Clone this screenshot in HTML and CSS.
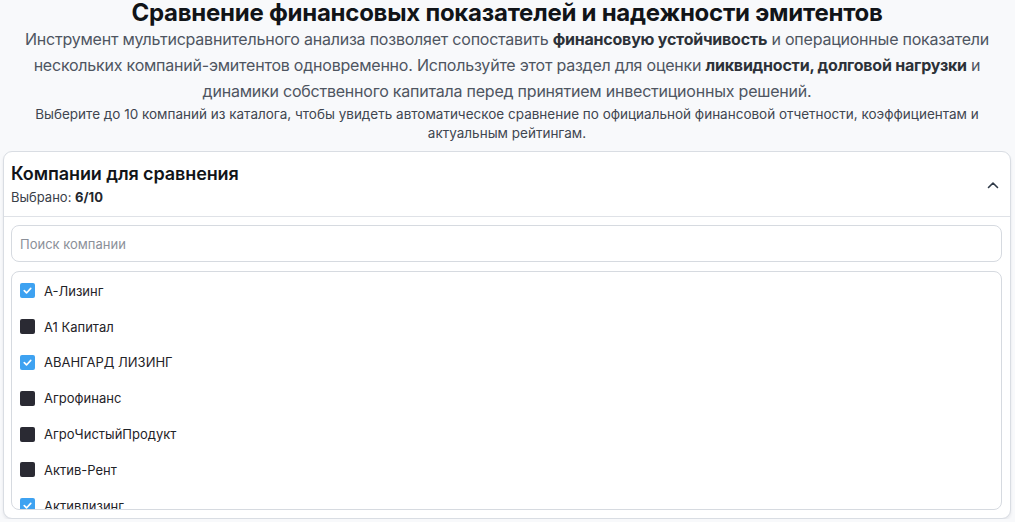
FILE: index.html
```html
<!DOCTYPE html>
<html lang="ru">
<head>
<meta charset="utf-8">
<title>Сравнение эмитентов</title>
<link rel="stylesheet" href="styles.css">
</head>
<body>
<div class="page">
  <header class="intro">
    <h1 class="title">Сравнение финансовых показателей и надежности эмитентов</h1>
    <p class="lead">Инструмент мультисравнительного анализа позволяет сопоставить <b>финансовую устойчивость</b> и операционные показатели нескольких компаний-эмитентов одновременно. Используйте этот раздел для оценки <b>ликвидности, долговой нагрузки</b> и динамики собственного капитала перед принятием инвестиционных решений.</p>
    <p class="hint">Выберите до 10 компаний из каталога, чтобы увидеть автоматическое сравнение по официальной финансовой отчетности, коэффициентам и актуальным рейтингам.</p>
  </header>

  <section class="card">
    <div class="card-head">
      <div class="head-text">
        <h2 class="card-title">Компании для сравнения</h2>
        <div class="count">Выбрано: <b>6/10</b></div>
      </div>
      <svg class="chevron" width="14" height="14" viewBox="0 0 14 14" aria-hidden="true"><path d="M2.5 9.5 L7 5 L11.5 9.5" fill="none" stroke="#2f3a48" stroke-width="1.6" stroke-linecap="round" stroke-linejoin="round"/></svg>
    </div>
    <div class="card-body">
      <input class="search" type="text" placeholder="Поиск компании">
      <div class="list">
        <label class="item"><span class="box on"><svg viewBox="0 0 16 16"><path d="M4 8.2 L6.8 11 L12 5.4" fill="none" stroke="#fff" stroke-width="2" stroke-linecap="round" stroke-linejoin="round"/></svg></span>А-Лизинг</label>
        <label class="item"><span class="box"></span>А1 Капитал</label>
        <label class="item"><span class="box on"><svg viewBox="0 0 16 16"><path d="M4 8.2 L6.8 11 L12 5.4" fill="none" stroke="#fff" stroke-width="2" stroke-linecap="round" stroke-linejoin="round"/></svg></span>АВАНГАРД ЛИЗИНГ</label>
        <label class="item"><span class="box"></span>Агрофинанс</label>
        <label class="item"><span class="box"></span>АгроЧистыйПродукт</label>
        <label class="item"><span class="box"></span>Актив-Рент</label>
        <label class="item"><span class="box on"><svg viewBox="0 0 16 16"><path d="M4 8.2 L6.8 11 L12 5.4" fill="none" stroke="#fff" stroke-width="2" stroke-linecap="round" stroke-linejoin="round"/></svg></span>Активлизинг</label>
        <label class="item"><span class="box"></span>Альфа-Банк</label>
        <label class="item"><span class="box"></span>Аренда-Центр</label>
      </div>
    </div>
  </section>
</div>
</body>
</html>
```

FILE: styles.css
```css
* { box-sizing: border-box; }
html, body { margin: 0; padding: 0; }
body {
  background: #f8f9fb;
  font-family: Inter, "Noto Sans", "Liberation Sans", sans-serif;
  color: #1f2328;
}
.page {
  padding: 0 4px 0 3px;
}
.intro {
  text-align: center;
  padding: 0 14px;
}
.title {
  margin: 0;
  font-size: 24px;
  line-height: 26px;
  font-weight: 700;
  color: #111418;
  letter-spacing: -0.25px;
}
.lead {
  margin: 0;
  font-size: 16px;
  line-height: 26px;
  color: #4e5561;
  letter-spacing: -0.22px;
}
.lead b { font-weight: 700; color: #2c3138; }
.hint {
  margin: 1px 0 0;
  font-size: 13.5px;
  line-height: 19px;
  color: #3f4650;
}
.card {
  margin-top: 8px;
  background: #fff;
  border: 1px solid #d9dde3;
  border-radius: 9px;
  box-shadow: 0 2px 3px rgba(20, 30, 50, 0.08);
  overflow: hidden;
}
.card-head {
  display: flex;
  align-items: center;
  justify-content: space-between;
  padding: 10px 10px 9px 7px;
  border-bottom: 1px solid #dfe2e7;
}
.card-title {
  margin: 0;
  font-size: 18px;
  line-height: 24px;
  font-weight: 600;
  color: #111418;
  letter-spacing: -0.1px;
}
.count {
  margin-top: 1px;
  font-size: 13px;
  line-height: 20px;
  color: #3a4049;
}
.count b { font-weight: 700; color: #23272d; }
.chevron { display: block; margin-top: 0; }
.card-body {
  padding: 8px 8px 8px 7px;
  display: flex;
  flex-direction: column;
  gap: 9px;
}
.search {
  display: block;
  width: 100%;
  height: 37px;
  border: 1px solid #d6dae0;
  border-radius: 8px;
  padding: 0 8px;
  font-family: inherit;
  font-size: 13px;
  color: #1f2328;
  background: #fff;
  outline: none;
}
.search::placeholder { color: #8b9099; }
.list {
  height: 239px;
  border: 1px solid #d6dae0;
  border-radius: 8px;
  padding: 1px 8px 0;
  overflow: hidden;
}
.item {
  display: flex;
  align-items: center;
  gap: 9px;
  height: 35.8px;
  font-size: 13px;
  color: #1f2328;
}
.box {
  flex: none;
  width: 15px;
  height: 15px;
  border-radius: 2px;
  background: #2a2a33;
  display: flex;
  align-items: center;
  justify-content: center;
}
.box.on { background: #3ea2f1; }
.box svg { width: 13px; height: 13px; display: block; }
```
